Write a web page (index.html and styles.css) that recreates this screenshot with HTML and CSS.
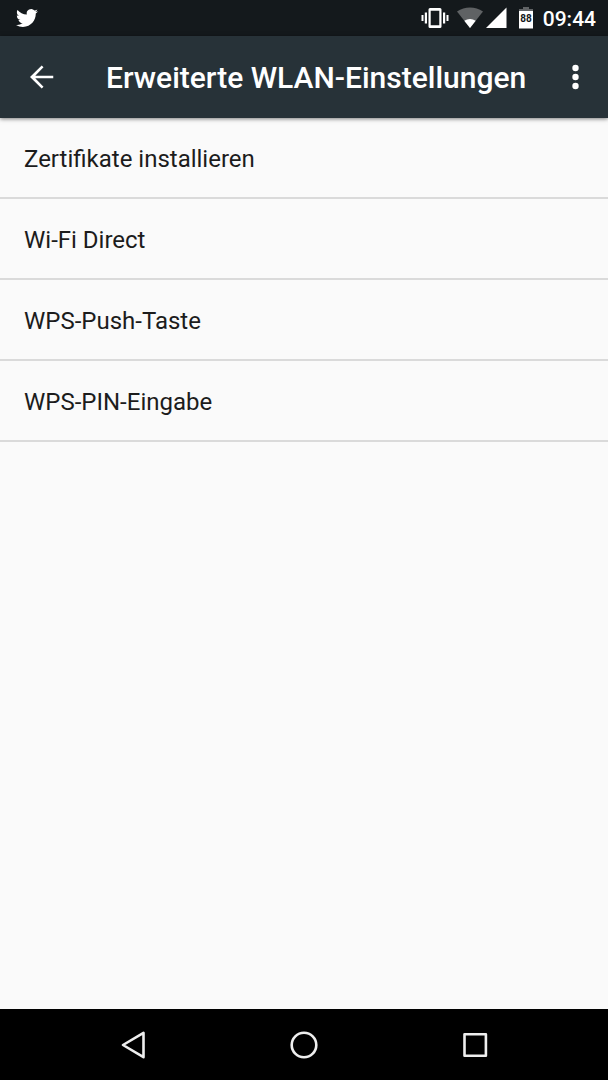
FILE: index.html
```html
<!DOCTYPE html>
<html lang="de">
<head>
<meta charset="utf-8">
<meta name="viewport" content="width=device-width, initial-scale=1">
<title>Erweiterte WLAN-Einstellungen</title>
<link rel="stylesheet" href="styles.css">
</head>
<body class="screen">
  <div class="status-bar">
    <svg class="icon-twitter" width="24" height="24" viewBox="0 0 24 24" aria-hidden="true"><path fill="#fff" d="M23.95 4.57a10 10 0 0 1-2.82.77 4.96 4.96 0 0 0 2.16-2.72c-.95.55-2 .95-3.13 1.18a4.92 4.92 0 0 0-8.38 4.48C7.69 8.1 4.07 6.13 1.64 3.16a4.82 4.82 0 0 0-.67 2.48c0 1.71.87 3.21 2.19 4.1a4.9 4.9 0 0 1-2.23-.62v.06a4.92 4.92 0 0 0 3.95 4.83 5 5 0 0 1-2.21.08 4.94 4.94 0 0 0 4.6 3.42A9.87 9.87 0 0 1 0 19.54a13.99 13.99 0 0 0 7.55 2.21c9.05 0 14-7.5 14-13.98 0-.21 0-.42-.02-.63a9.94 9.94 0 0 0 2.46-2.55z"/></svg>
    <div class="status-icons">
      <svg width="28" height="24" viewBox="0 0 28 24" aria-hidden="true"><g fill="#fff"><path fill-rule="evenodd" d="M9 2h10a1.500 1.500 0 0 1 1.500 1.500v17A1.500 1.500 0 0 1 19 22H9a1.500 1.500 0 0 1-1.500-1.500v-17A1.500 1.500 0 0 1 9 2zM9.700 4.700v14.600h8.600V4.700z"/><path d="M.5 9h2v6h-2zM3.800 6.500h2.200v11H3.800zM22 6.500h2.200v11H22zM25.500 9h2v6h-2z"/></g></svg>
      <svg class="icon-wifi" width="26" height="24" viewBox="0 0 26 24" aria-hidden="true"><path fill="#5f6264" d="M13 22 0 5.500Q6 1.500 13 1.500T26 5.500z"/><path fill="#fff" d="M13 22 7.300 14.700Q10 13 13 13t5.700 1.700z"/></svg>
      <svg class="icon-signal" width="21" height="24" viewBox="0 0 21 24" aria-hidden="true"><path fill="#fff" d="M20.500 1.500V22H0z"/></svg>
      <svg class="icon-battery" width="14" height="24" viewBox="0 0 14 24" aria-hidden="true"><path fill="#606365" d="M4 1h6v2h4v3H0V3h4z"/><path fill="#fff" d="M0 5h14v17.500H0z"/><text class="battery-level" x="7" y="16" text-anchor="middle">88</text></svg>
      <time class="clock" datetime="09:44">09:44</time>
    </div>
  </div>
  <header class="toolbar">
    <button class="icon-button" type="button" aria-label="Zurück"><svg width="36" height="36" viewBox="0 0 24 24" aria-hidden="true"><path fill="#fff" d="M19.500 11.100H7.500l5.500-5.600-1.200-1.200L4 12l7.800 7.700 1.200-1.200-5.500-5.600h12z"/></svg></button>
    <h1 class="title">Erweiterte WLAN-Einstellungen</h1>
    <button class="icon-button" type="button" aria-label="Weitere Optionen"><svg width="36" height="36" viewBox="0 0 36 36" aria-hidden="true"><g fill="#fff"><circle cx="19.500" cy="9" r="3.200"/><circle cx="19.500" cy="18" r="3.200"/><circle cx="19.500" cy="27" r="3.200"/></g></svg></button>
  </header>
  <main class="settings">
    <button class="setting" type="button">Zertifikate installieren</button>
    <button class="setting" type="button">Wi-Fi Direct</button>
    <button class="setting" type="button">WPS-Push-Taste</button>
    <button class="setting" type="button">WPS-PIN-Eingabe</button>
  </main>
  <nav class="nav-bar" aria-label="System">
    <button class="nav-button" type="button" aria-label="Zurück"><svg width="32" height="32" viewBox="0 0 32 32" fill="none" stroke="#eee" stroke-width="2.600" stroke-linejoin="round" aria-hidden="true"><path d="M26.500 3.800v24.400L6 16z"/></svg></button>
    <button class="nav-button" type="button" aria-label="Startbildschirm"><svg width="32" height="32" viewBox="0 0 32 32" fill="none" stroke="#eee" stroke-width="2.600" aria-hidden="true"><circle cx="16" cy="16" r="12.300"/></svg></button>
    <button class="nav-button" type="button" aria-label="Letzte Apps"><svg width="32" height="32" viewBox="0 0 32 32" fill="none" stroke="#eee" stroke-width="2.600" stroke-linejoin="round" aria-hidden="true"><path d="M5.500 5.300h21.400v21.400H5.500z"/></svg></button>
  </nav>
</body>
</html>
```

FILE: styles.css
```css
* {
  box-sizing: border-box;
}

.screen {
  display: flex;
  flex-direction: column;
  min-height: 100vh;
  margin: 0;
  background: #fafafa;
  color: #1c1c1c;
  font-family: Roboto, "Noto Sans", sans-serif;
}

button {
  margin: 0;
  border: 0;
  background: none;
  color: inherit;
  font: inherit;
}

svg {
  display: block;
  flex: none;
}

.status-bar {
  display: flex;
  align-items: center;
  justify-content: space-between;
  height: 36px;
  padding: 0 12px 0 16px;
  background: #14191c;
  color: #fff;
}

.icon-twitter {
  width: 22px;
}

.status-icons {
  display: flex;
  align-items: center;
}

.icon-wifi {
  margin-left: 8px;
}

.icon-signal {
  margin-left: 3px;
}

.icon-battery {
  margin: 0 10px 0 12px;
}

.battery-level {
  fill: #14191c;
  font-size: 10px;
  font-weight: 700;
}

.clock {
  padding-top: 2px;
  font-size: 21px;
  font-weight: 500;
  line-height: 24px;
}

.toolbar {
  position: relative;
  display: flex;
  align-items: center;
  min-height: 82px;
  padding: 0 8px 0 16px;
  background: #273238;
  color: #fff;
  box-shadow: 0 1px 4px rgba(0, 0, 0, 0.5);
}

.icon-button {
  flex: none;
  padding: 8px;
}

.title {
  flex: 1;
  margin: 0;
  padding: 2px 0 0 38px;
  font-size: 30px;
  font-weight: 500;
  line-height: 36px;
  white-space: nowrap;
}

.settings {
  display: flex;
  flex: 1;
  flex-direction: column;
}

.setting {
  padding: 27px 24px 24px;
  border-bottom: 2px solid #dadada;
  font-size: 24px;
  line-height: 28px;
  text-align: left;
}

.nav-bar {
  display: flex;
  padding: 0 48px;
  background: #000;
}

.nav-button {
  display: flex;
  flex: 1;
  justify-content: center;
  padding: 20px 0 19px;
}
```
